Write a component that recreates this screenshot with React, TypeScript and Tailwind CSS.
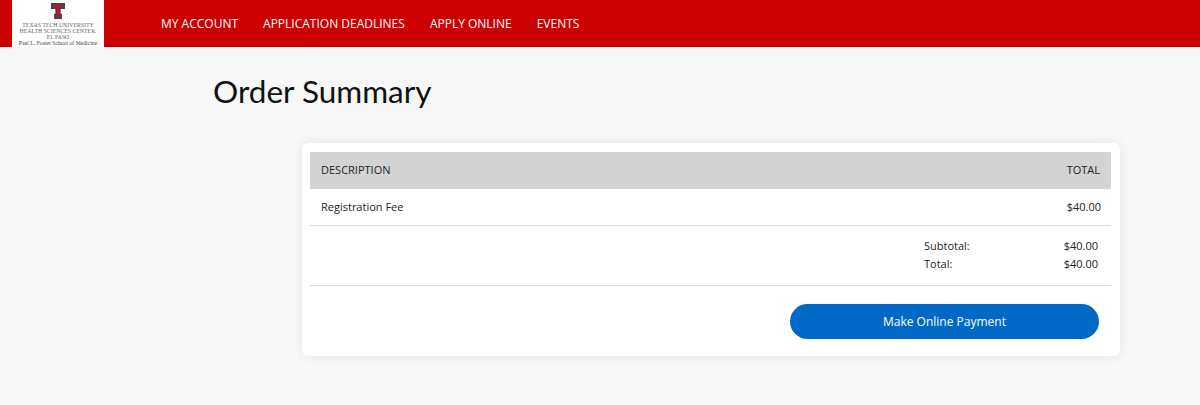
const navItems = ['MY ACCOUNT', 'APPLICATION DEADLINES', 'APPLY ONLINE', 'EVENTS'];

const Logo = () => (
  <div className="ml-3 flex h-[47px] w-[92px] shrink-0 flex-col items-center bg-white font-['Liberation_Serif',serif] text-[#666] leading-none">
    <svg width="14" height="16" viewBox="0 0 16 17" className="mt-[3px]" preserveAspectRatio="none">
      <path d="M0 0H16V6.500H11V11.500H12.500V17H3.500V11.500H5V6.500H0Z" fill="#444" />
      <path d="M2.500 2H13.500V4.500H9.500V13H10.500V15H5.500V13H6.500V4.500H2.500Z" fill="#c8102e" />
    </svg>
    <div className="mt-[3px] whitespace-nowrap text-[5.8px] leading-[6px]">TEXAS TECH UNIVERSITY</div>
    <div className="whitespace-nowrap text-[5.8px] leading-[6px]">HEALTH SCIENCES CENTER.</div>
    <div className="whitespace-nowrap text-[5.8px] leading-[6px]">EL PASO</div>
    <div className="whitespace-nowrap text-[5.7px] leading-[6px] text-[#444]">Paul L. Foster School of Medicine</div>
  </div>
);

export default function App() {
  return (
    <div className="h-[405px] w-[1200px] overflow-hidden bg-[#f7f7f7] font-['Open_Sans',sans-serif] text-[#212529]">
      <header className="flex h-[47px] items-center bg-[#cc0000]">
        <Logo />
        <nav className="ml-[57px] flex gap-[25px] text-xs text-white">
          {navItems.map((item) => (
            <a key={item} href="#" className="whitespace-nowrap">
              {item}
            </a>
          ))}
        </nav>
      </header>

      <h1 className="ml-[213px] mt-[22px] font-['Lato',sans-serif] text-[31.5px] leading-[44px] text-[#111]">
        Order Summary
      </h1>

      <div className="ml-[302px] mt-[30px] w-[818px] rounded-md bg-white pl-2 pr-[9px] pt-[9px] text-[11px] shadow-[0_0_12px_rgba(0,0,0,0.08)]">
        <div className="flex h-[37px] items-center justify-between bg-[#d3d3d3] pl-[11px] pr-[11px]">
          <span>DESCRIPTION</span>
          <span>TOTAL</span>
        </div>
        <div className="flex h-[37px] items-center justify-between border-b border-[#dcdcdc] pl-[11px] pr-[10px] pt-[1px]">
          <span>Registration Fee</span>
          <span>$40.00</span>
        </div>
        <div className="flex h-[60px] flex-col justify-center gap-[2px] border-b border-[#dcdcdc] pb-[2px] pr-[13px] pl-[614px] leading-[16px]">
          <div className="flex justify-between">
            <span>Subtotal:</span>
            <span>$40.00</span>
          </div>
          <div className="flex justify-between">
            <span>Total:</span>
            <span>$40.00</span>
          </div>
        </div>
        <div className="flex h-[70px] items-start justify-end pr-[12px] pt-[18px]">
          <button className="h-[35px] w-[309px] rounded-full bg-[#0069c8] text-xs text-white">
            Make Online Payment
          </button>
        </div>
      </div>
    </div>
  );
}
